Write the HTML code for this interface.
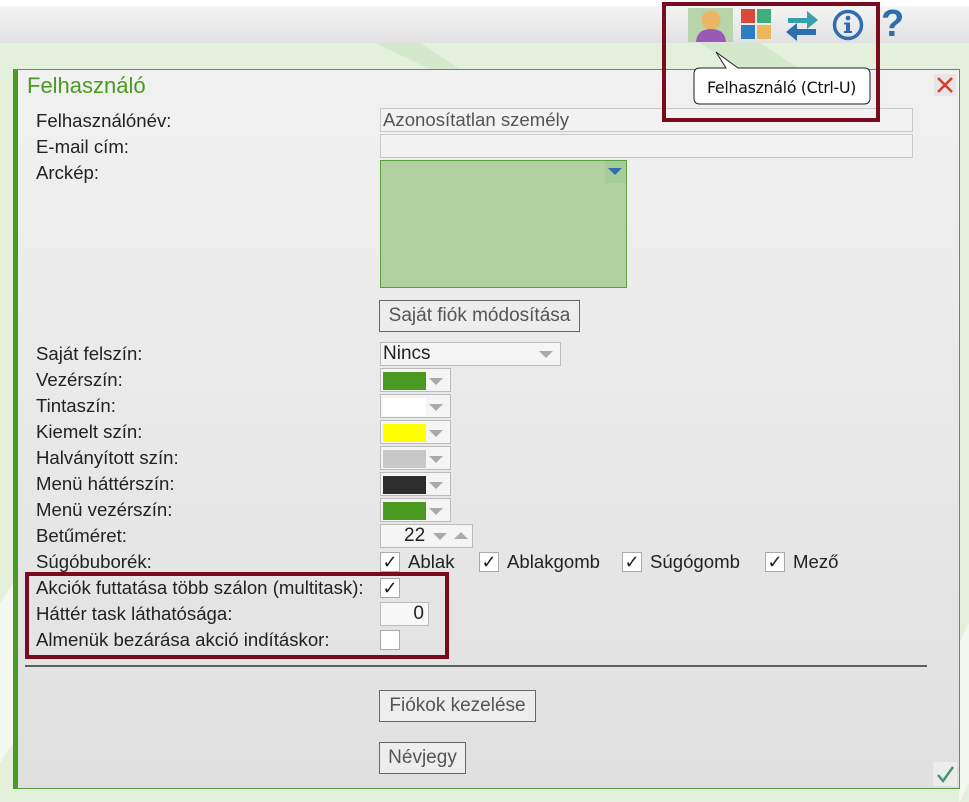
<!DOCTYPE html>
<html><head><meta charset="utf-8"><style>
*{margin:0;padding:0;box-sizing:border-box}
body{width:969px;height:802px;overflow:hidden;background:#e3f0dc;font-family:"Liberation Sans",sans-serif;position:relative;color:#222}
.a{position:absolute}
.lbl{position:absolute;left:36px;font-size:18.6px;line-height:20px}
.in{position:absolute;border:1px solid #c8c8c8;background:#f2f2f2}
.cb{position:absolute;width:20px;height:20px;border:1px solid #aaa;background:#fff;font-size:18px;line-height:18px;text-align:center;color:#222}
.btn{position:absolute;border:1px solid #666;background:#ededed;font-size:19px;color:#555;text-align:center;line-height:30px;white-space:nowrap}
.dd{position:absolute;width:71px;height:24px;border:1px solid #bbb;background:#f5f5f5}
.dd i{position:absolute;left:2px;top:3px;width:43px;height:18px}
.dd b{position:absolute;right:7px;top:9px;border-left:7px solid transparent;border-right:7px solid transparent;border-top:7px solid #aaa}
.t{position:absolute;font-size:18.6px;line-height:20px}
</style></head><body>
<div class="a" style="left:0;top:0;width:969px;height:6px;background:#fff"></div>
<div class="a" style="left:0;top:6px;width:969px;height:37px;background:linear-gradient(#f4f4f4,#e2e2e2)"></div>
<svg class="a" style="left:0;top:43px" width="969" height="759"><polygon points="375,0 420,0 460,26 430,26" fill="#d4e8cc"/><polygon points="700,0 760,0 800,26 740,26" fill="#d4e8cc"/><polygon points="0,560 13,540 13,700 0,720" fill="#f2f8ef"/><polygon points="959,600 969,580 969,740 959,760" fill="#f2f8ef"/></svg>
<div class="a" style="left:688px;top:8px;width:45px;height:34px;background:#b7d4ab"></div>
<svg class="a" style="left:693px;top:8px" width="36" height="34"><circle cx="18" cy="12" r="9.5" fill="#ebb467"/><path d="M3 34 Q4 21 18 21 Q32 21 33 34Z" fill="#9b59b6"/></svg>
<svg class="a" style="left:741px;top:9px" width="32" height="32"><rect x="0" y="0" width="14" height="14" fill="#d9493a"/><rect x="16" y="0" width="14" height="14" fill="#3fae7c"/><rect x="0" y="16" width="14" height="14" fill="#2f7dc1"/><rect x="16" y="16" width="14" height="14" fill="#eeb85a"/></svg>
<svg class="a" style="left:784px;top:8px" width="36" height="34"><path d="M4 10 H23 V3 L34 12 L23 21 V15 H4Z" fill="#37a0a8"/><path d="M32 21 H13 V15 L2 24 L13 33 V27 H32Z" fill="#2e6db0"/></svg>
<svg class="a" style="left:831px;top:8px" width="34" height="34"><circle cx="17" cy="17" r="13.5" fill="none" stroke="#2e6db0" stroke-width="3.5"/><circle cx="17" cy="10" r="2.4" fill="#2e6db0"/><path d="M13 14.5 H19 V23 H21 V25 H13 V23 H15 V16.5 H13Z" fill="#2e6db0"/></svg>
<div class="a" style="left:881px;top:4px;font-size:38px;font-weight:bold;color:#2e6db0;line-height:40px">?</div>
<div class="a" style="left:13px;top:69px;width:947px;height:720px;border:1px solid #5a9a3a;border-left:5px solid #4a9a22;background:linear-gradient(#f1f1f1,#e0e0e0)"></div>
<div class="a" style="left:27px;top:73px;font-size:22px;color:#4a9a22">Felhasználó</div>
<div class="a" style="left:934px;top:74px;width:22px;height:22px;background:#e6e6e6"></div>
<svg class="a" style="left:934px;top:74px" width="22" height="22"><path d="M4 4 L18 18 M18 4 L4 18" stroke="#d6402f" stroke-width="2.6"/></svg>
<div class="lbl" style="top:111px">Felhasználónév:</div>
<div class="lbl" style="top:137px">E-mail cím:</div>
<div class="lbl" style="top:163px">Arckép:</div>
<div class="in" style="left:380px;top:108px;width:533px;height:24px;font-size:18.6px;color:#555;line-height:22px;padding-left:2px">Azonosítatlan személy</div>
<div class="in" style="left:380px;top:134px;width:533px;height:24px"></div>
<div class="a" style="left:380px;top:160px;width:247px;height:128px;background:#b2d1a0;border:1px solid #58a040"></div>
<div class="a" style="left:605px;top:161px;width:21px;height:22px;background:#a8cc98"></div>
<div class="a" style="left:608px;top:168px;border-left:7px solid transparent;border-right:7px solid transparent;border-top:7px solid #2e6db0"></div>
<div class="btn" style="left:379px;top:300px;width:201px;height:32px">Saját fiók módosítása</div>
<div class="lbl" style="top:344px">Saját felszín:</div>
<div class="lbl" style="top:370px">Vezérszín:</div>
<div class="lbl" style="top:396px">Tintaszín:</div>
<div class="lbl" style="top:422px">Kiemelt szín:</div>
<div class="lbl" style="top:448px">Halványított szín:</div>
<div class="lbl" style="top:474px">Menü háttérszín:</div>
<div class="lbl" style="top:500px">Menü vezérszín:</div>
<div class="lbl" style="top:526px">Betűméret:</div>
<div class="lbl" style="top:552px">Súgóbuborék:</div>
<div class="lbl" style="top:578px">Akciók futtatása több szálon (multitask):</div>
<div class="lbl" style="top:604px">Háttér task láthatósága:</div>
<div class="lbl" style="top:630px">Almenük bezárása akció indításkor:</div>
<div class="a" style="left:380px;top:342px;width:181px;height:24px;border:1px solid #bbb;background:#f5f5f5;font-size:19px;line-height:22px;padding-left:2px">Nincs<b style="position:absolute;right:7px;top:8px;border-left:7px solid transparent;border-right:7px solid transparent;border-top:7px solid #aaa"></b></div>
<div class="dd" style="left:380px;top:368px"><i style="background:#4a9a22"></i><b></b></div>
<div class="dd" style="left:380px;top:394px"><i style="background:#fff"></i><b></b></div>
<div class="dd" style="left:380px;top:420px"><i style="background:#ffff00"></i><b></b></div>
<div class="dd" style="left:380px;top:446px"><i style="background:#c8c8c8"></i><b></b></div>
<div class="dd" style="left:380px;top:472px"><i style="background:#2d2d2d"></i><b></b></div>
<div class="dd" style="left:380px;top:498px"><i style="background:#4a9a22"></i><b></b></div>
<div class="a" style="left:380px;top:524px;width:93px;height:24px;border:1px solid #bbb;background:#f5f5f5;font-size:19px;line-height:22px;padding-left:23px">22<b style="position:absolute;left:52px;top:8px;border-left:7px solid transparent;border-right:7px solid transparent;border-top:7px solid #aaa"></b><b style="position:absolute;left:73px;top:7px;border-left:7px solid transparent;border-right:7px solid transparent;border-bottom:7px solid #aaa"></b></div>
<div class="cb" style="left:380px;top:552px">✓</div><div class="t" style="left:408px;top:552px">Ablak</div>
<div class="cb" style="left:479px;top:552px">✓</div><div class="t" style="left:507px;top:552px">Ablakgomb</div>
<div class="cb" style="left:622px;top:552px">✓</div><div class="t" style="left:650px;top:552px">Súgógomb</div>
<div class="cb" style="left:765px;top:552px">✓</div><div class="t" style="left:793px;top:552px">Mező</div>
<div class="cb" style="left:380px;top:578px">✓</div>
<div class="a" style="left:380px;top:602px;width:49px;height:24px;border:1px solid #bbb;background:#f7f7f7;font-size:19px;line-height:22px;text-align:right;padding-right:4px">0</div>
<div class="cb" style="left:380px;top:630px"></div>
<div class="a" style="left:25px;top:665px;width:902px;height:2px;background:#606060"></div>
<div class="btn" style="left:379px;top:690px;width:157px;height:32px">Fiókok kezelése</div>
<div class="btn" style="left:379px;top:742px;width:87px;height:32px">Névjegy</div>
<div class="a" style="left:933px;top:762px;width:24px;height:24px;background:#ececec"></div>
<svg class="a" style="left:933px;top:762px" width="24" height="24"><path d="M5 13 L10 19 L20 5" fill="none" stroke="#3f9a6e" stroke-width="2.4"/></svg>
<div class="a" style="left:662px;top:2px;width:218px;height:120px;border:4px solid #7a0a1e"></div>
<div class="a" style="left:25px;top:572px;width:424px;height:87px;border:4px solid #7a0a1e"></div>
<svg class="a" style="left:692px;top:50px" width="184" height="58"><path d="M8 18 H34 L24 2 L46 18 H172 Q178 18 178 24 V48 Q178 54 172 54 H8 Q2 54 2 48 V24 Q2 18 8 18Z" fill="#fff" stroke="#222" stroke-width="1"/></svg>
<div class="a" style="left:707px;top:78px;font-size:16px;font-family:'DejaVu Sans',sans-serif;color:#111;letter-spacing:-0.4px">Felhasználó (Ctrl-U)</div>
</body></html>
